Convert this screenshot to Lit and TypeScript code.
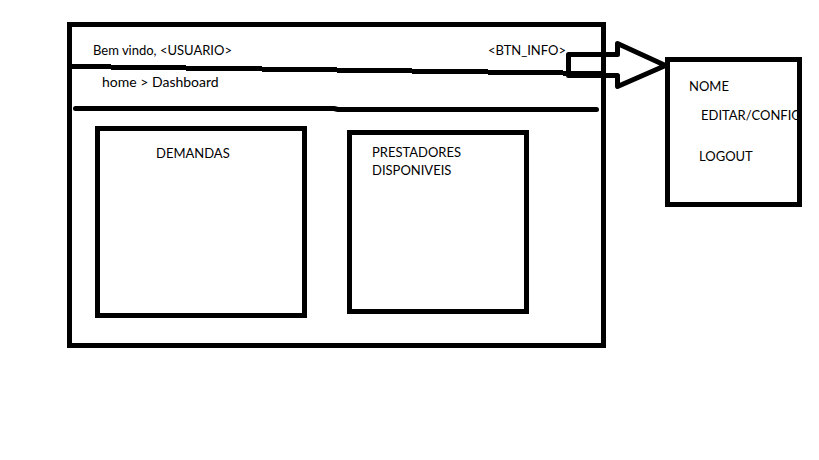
import { LitElement, html, css } from "lit";
import { customElement } from "lit/decorators.js";

const shared = css`
  * { box-sizing: border-box; }
  a, button {
    font: inherit;
    color: inherit;
    text-decoration: none;
    background: none;
    border: 0;
    padding: 0;
    margin: 0;
    cursor: pointer;
    white-space: nowrap;
  }
  h2, p { margin: 0; font: inherit; }
`;

@customElement("info-menu")
export class InfoMenu extends LitElement {
  static styles = [shared, css`
    :host { display: block; }
    .menu {
      border: 5px solid #000;
      padding: 15px 0 37px 19px;
      display: flex;
      flex-direction: column;
      align-items: flex-start;
    }
    .edit { margin: 11px 0 23px 12px; }
    .logout { margin-left: 10px; }
  `];

  render() {
    return html`
      <nav class="menu" aria-label="Menu do usuário">
        <p>NOME</p>
        <a class="edit" href="#config">EDITAR/CONFIG</a>
        <button class="logout" type="button">LOGOUT</button>
      </nav>
    `;
  }
}

@customElement("app-root")
export class AppRoot extends LitElement {
  static styles = [shared, css`
    :host {
      display: block;
      background: #fff;
      color: #000;
      font: 13px/18px Lato, "Open Sans", sans-serif;
    }
    .page {
      display: flex;
      align-items: flex-start;
      gap: 59px;
      padding: 22px 17px 22px 67px;
    }
    .frame {
      position: relative;
      flex: 1;
      min-width: 0;
      border: 5px solid #000;
      padding-bottom: 25px;
    }
    .top {
      display: flex;
      justify-content: space-between;
      padding: 14px 35px 14px 21px;
    }
    .crumbs { padding: 0 30px 15px; font-size: 14px; }
    svg {
      display: block;
      fill: none;
      stroke: #000;
      stroke-width: 5px;
    }
    .slope {
      position: absolute;
      left: 0;
      top: 37px;
      width: 100%;
      height: 13px;
      shape-rendering: crispEdges;
    }
    .rule {
      width: calc(100% - 3px);
      height: 6px;
      margin-left: 1px;
      stroke-linecap: round;
    }
    .arrow {
      position: absolute;
      right: -69px;
      top: 14px;
      width: 104px;
      height: 50px;
      pointer-events: none;
    }
    .cards {
      display: grid;
      grid-template-columns: 212fr 182fr;
      align-items: start;
      gap: 40px;
      padding: 14px 72px 0 23px;
    }
    .card {
      border: 5px solid #000;
      min-height: 192px;
      padding: 13px 20px;
    }
    .demands { padding-left: 56px; }
    .providers {
      min-height: 184px;
      margin-top: 4px;
      padding-top: 8px;
    }
    .menu { flex: 0 0 137px; min-width: 0; margin-top: 35px; }
  `];

  render() {
    return html`
      <div class="page">
        <main class="frame">
          <header class="top">
            <p>Bem vindo, &lt;USUARIO&gt;</p>
            <button type="button">&lt;BTN_INFO&gt;</button>
          </header>
          <svg class="slope" viewBox="0 0 529 13" preserveAspectRatio="none" aria-hidden="true">
            <path d="M0 2.5H39M39 3.5H114M114 4.5H190M190 5.5H265M265 6.5H340M340 7.5H416M416 8.5H491M491 9.5H529" />
          </svg>
          <nav class="crumbs" aria-label="Navegação"><a href="#home">home</a> &gt; Dashboard</nav>
          <svg class="rule" viewBox="0 0 526 6" preserveAspectRatio="none" aria-hidden="true">
            <path d="M2.5 2.5H261M265 3.5H523.5M261 2.5L265 3.5" />
          </svg>
          <div class="cards">
            <section class="card demands"><h2>DEMANDAS</h2></section>
            <section class="card providers"><h2>PRESTADORES<br />DISPONIVEIS</h2></section>
          </div>
          <svg class="arrow" viewBox="0 0 104 50" stroke-linejoin="round" aria-hidden="true">
            <path d="M2.5 13.5H51.5V2.5L99.5 24.5L51.5 45.5V34.5H2.5Z" />
          </svg>
        </main>
        <info-menu class="menu"></info-menu>
      </div>
    `;
  }
}
